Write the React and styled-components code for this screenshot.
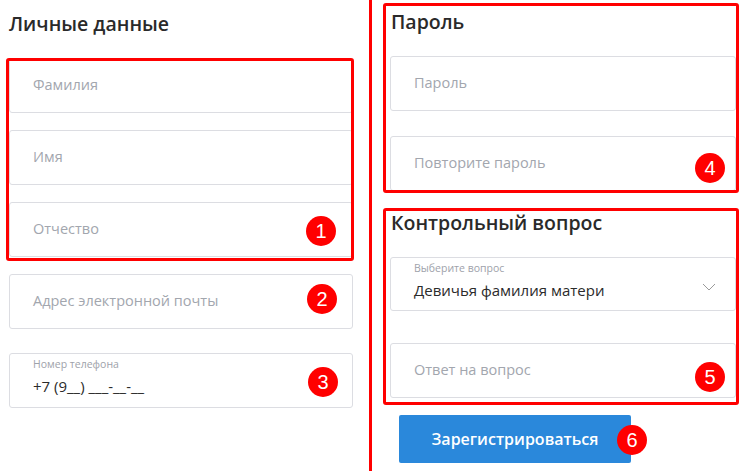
import React from 'react';
import styled, { createGlobalStyle } from 'styled-components';

const GlobalStyle = createGlobalStyle`
  html, body {
    margin: 0;
    padding: 0;
    background: #fff;
  }
  body {
    font-family: "Open Sans", "Noto Sans", "Liberation Sans", sans-serif;
    color: #2b2b2b;
  }
`;

const Page = styled.div`
  display: flex;
  width: 743px;
  height: 471px;
  overflow: hidden;
`;

const LeftColumn = styled.div`
  width: 344px;
  padding: 12px 16px 0 9px;
  display: flex;
  flex-direction: column;
`;

const Divider = styled.div`
  width: 3px;
  background: #ff0000;
  flex-shrink: 0;
`;

const RightColumn = styled.div`
  width: 346px;
  padding: 3px 0 0 18px;
  display: flex;
  flex-direction: column;
`;

const Heading = styled.h2`
  margin: 0 0 22px;
  font-size: 19.5px;
  line-height: 24px;
  font-weight: 600;
  color: #2a2a2a;
  padding-left: ${p => p.$indent || 0}px;
`;

// красная рамка-пометка поверх группы
const Marked = styled.div`
  position: relative;
  display: flex;
  flex-direction: column;
  gap: ${p => p.$gap}px;
  padding: ${p => p.$pad || '0'};
  margin-top: ${p => p.$top || 0}px;

  &::after {
    content: '';
    position: absolute;
    top: 0;
    bottom: ${p => p.$bottom || 0}px;
    left: ${p => p.$left || 0}px;
    right: ${p => p.$right || 0}px;
    border: 3px solid #ff0000;
    border-radius: 3px;
    pointer-events: none;
  }
`;

const Field = styled.div`
  position: relative;
  box-sizing: border-box;
  height: ${p => p.$h || 55}px;
  margin-top: ${p => p.$top || 0}px;
  border: 1px solid #dcdde2;
  border-radius: 3px;
  background: #fff;
  padding: ${p => (p.$labeled ? '4px 0 0 23px' : '0 0 0 23px')};
  display: flex;
  flex-direction: column;
  justify-content: ${p => (p.$labeled ? 'flex-start' : 'center')};
`;

const Placeholder = styled.span`
  font-size: 14.5px;
  color: #a2a6ae;
  margin-top: -3px;
`;

const SmallLabel = styled.span`
  font-size: 10.5px;
  line-height: 13px;
  color: #9ea2aa;
`;

const Value = styled.span`
  font-size: 15px;
  line-height: 20px;
  color: #2b2b2b;
  margin-top: 5px;
`;

const Chevron = styled.svg`
  position: absolute;
  right: 19px;
  top: 25px;
`;

const Badge = styled.span`
  position: absolute;
  right: ${p => p.$right}px;
  top: ${p => p.$top}px;
  width: 30px;
  height: 30px;
  border-radius: 50%;
  background: #ff0000;
  color: #fff;
  font-size: 20px;
  line-height: 30px;
  text-align: center;
  font-family: "Liberation Sans", "Open Sans", sans-serif;
  z-index: 2;
`;

const ButtonRow = styled.div`
  position: relative;
  margin: 10px 0 0 9px;
  width: 232px;
`;

const Button = styled.button`
  width: 232px;
  height: 48px;
  border: none;
  border-radius: 2px;
  background: #2a88db;
  color: #fff;
  font-family: inherit;
  font-size: 16px;
  font-weight: 600;
  cursor: pointer;
`;

export default function App() {
  return (
    <>
      <GlobalStyle />
      <Page>
        <LeftColumn>
          <Heading>Личные данные</Heading>
          <Marked $gap={17} $left={-3} $right={-1} $bottom={-4}>
            <Field>
              <Placeholder>Фамилия</Placeholder>
            </Field>
            <Field>
              <Placeholder>Имя</Placeholder>
            </Field>
            <Field>
              <Placeholder>Отчество</Placeholder>
              <Badge $right={16} $top={13}>1</Badge>
            </Field>
          </Marked>
          <Field $top={17}>
            <Placeholder>Адрес электронной почты</Placeholder>
            <Badge $right={15} $top={9}>2</Badge>
          </Field>
          <Field $top={24} $labeled>
            <SmallLabel>Номер телефона</SmallLabel>
            <Value>+7 (9__) ___-__-__</Value>
            <Badge $right={14} $top={13}>3</Badge>
          </Field>
        </LeftColumn>
        <Divider />
        <RightColumn>
          <Marked $gap={25} $pad="7px 0 2px" $left={-7} $right={-3}>
            <Heading $indent={1}>Пароль</Heading>
            <Field style={{ marginTop: -25 }}>
              <Placeholder>Пароль</Placeholder>
            </Field>
            <Field>
              <Placeholder>Повторите пароль</Placeholder>
              <Badge $right={10} $top={16}>4</Badge>
            </Field>
          </Marked>
          <Marked $gap={32} $pad="3px 0 7px" $left={-7} $right={-3} $top={15}>
            <Heading $indent={1}>Контрольный вопрос</Heading>
            <Field $h={54} $labeled style={{ marginTop: -32 }}>
              <SmallLabel>Выберите вопрос</SmallLabel>
              <Value>Девичья фамилия матери</Value>
              <Chevron width="14" height="8" viewBox="0 0 14 8">
                <polyline points="1,1 7,7 13,1" fill="none" stroke="#9a9a9a" strokeWidth="1" />
              </Chevron>
            </Field>
            <Field>
              <Placeholder>Ответ на вопрос</Placeholder>
              <Badge $right={10} $top={18}>5</Badge>
            </Field>
          </Marked>
          <ButtonRow>
            <Button>Зарегистрироваться</Button>
            <Badge $right={-16} $top={10}>6</Badge>
          </ButtonRow>
        </RightColumn>
      </Page>
    </>
  );
}
